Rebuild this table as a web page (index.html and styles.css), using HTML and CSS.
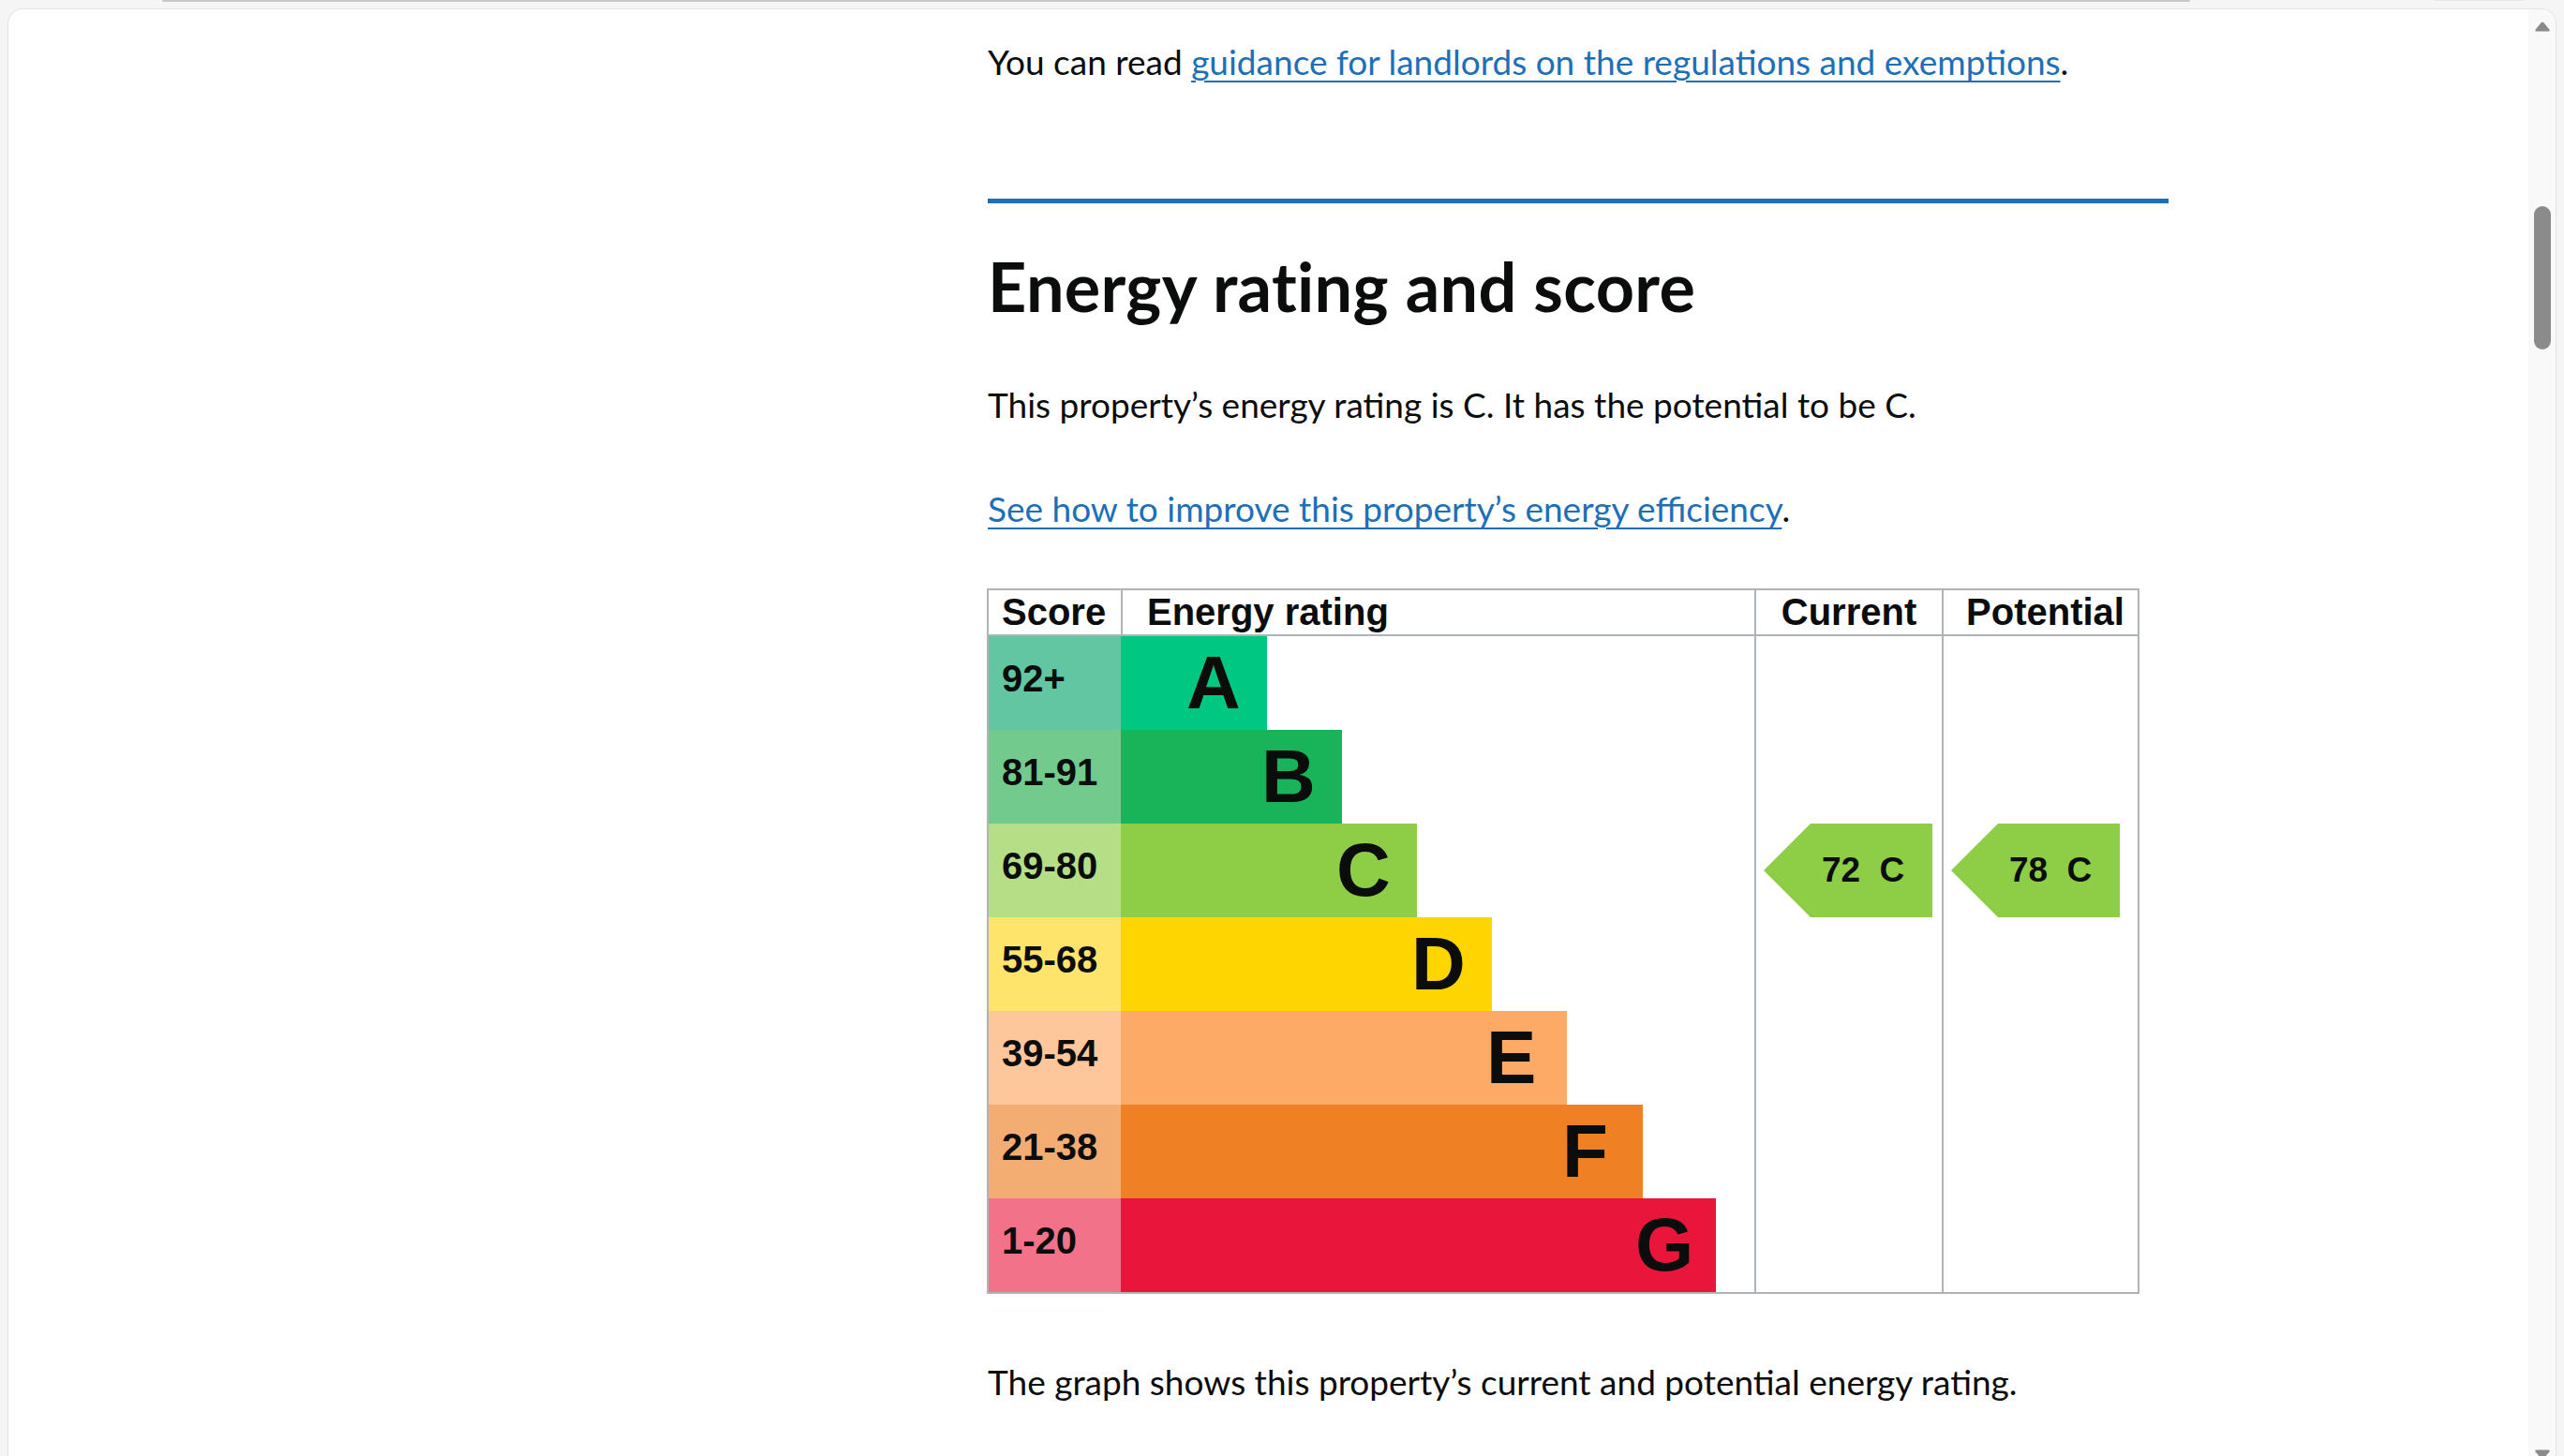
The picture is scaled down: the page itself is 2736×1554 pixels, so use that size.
FILE: index.html
```html
<!DOCTYPE html>
<html lang="en">
<head>
<meta charset="utf-8">
<title>Energy performance certificate</title>
<link rel="stylesheet" href="styles.css">
</head>
<body>
<div class="chrome">
  <span class="tab-shadow"></span>
  <span class="tab-shadow faint"></span>
</div>
<div class="window">
  <main class="page">
    <div class="layout">
      <div class="side"></div>
      <div class="content">
        <p class="body-text first">You can read <a class="link" href="#">guidance for landlords on the regulations and exemptions</a>.</p>
        <hr class="section-rule">
        <h2 class="heading">Energy rating and score</h2>
        <p class="body-text intro">This property’s energy rating is C. It has the potential to be C.</p>
        <p class="body-text improve"><a class="link" href="#">See how to improve this property’s energy efficiency</a>.</p>

        <div class="epc" role="img" aria-label="Energy rating chart">
          <div class="epc-head">
            <div class="h-cell h-score">Score</div>
            <div class="h-cell h-rating">Energy rating</div>
            <div class="h-cell h-current">Current</div>
            <div class="h-cell h-potential">Potential</div>
          </div>
          <div class="epc-body">
            <div class="bands">
              <div class="band band-a"><div class="band-score">92+</div><div class="band-bar"><span class="band-letter">A</span></div></div>
              <div class="band band-b"><div class="band-score">81-91</div><div class="band-bar"><span class="band-letter">B</span></div></div>
              <div class="band band-c"><div class="band-score">69-80</div><div class="band-bar"><span class="band-letter">C</span></div></div>
              <div class="band band-d"><div class="band-score">55-68</div><div class="band-bar"><span class="band-letter">D</span></div></div>
              <div class="band band-e"><div class="band-score">39-54</div><div class="band-bar"><span class="band-letter">E</span></div></div>
              <div class="band band-f"><div class="band-score">21-38</div><div class="band-bar"><span class="band-letter">F</span></div></div>
              <div class="band band-g"><div class="band-score">1-20</div><div class="band-bar"><span class="band-letter">G</span></div></div>
            </div>
            <div class="marker-col">
              <div class="marker marker-c">72 C</div>
            </div>
            <div class="marker-col">
              <div class="marker marker-c">78 C</div>
            </div>
          </div>
        </div>

        <p class="body-text graph-note">The graph shows this property’s current and potential energy rating.</p>
      </div>
    </div>
  </main>
  <div class="scrollbar" aria-hidden="true">
    <svg class="sb-arrow sb-up" width="16" height="11" viewBox="0 0 16 11"><path d="M6.6 1.2 Q8 -0.4 9.4 1.2 L15.4 8.6 Q16.4 10.5 14.2 10.5 L1.8 10.5 Q-0.4 10.5 0.6 8.6 Z" fill="#8b8b8b"/></svg>
    <div class="sb-thumb"></div>
    <svg class="sb-arrow sb-down" width="16" height="11" viewBox="0 0 16 11"><path d="M6.6 9.8 Q8 11.4 9.4 9.8 L15.4 2.4 Q16.4 0.5 14.2 0.5 L1.8 0.5 Q-0.4 0.5 0.6 2.4 Z" fill="#8b8b8b"/></svg>
  </div>
</div>
</body>
</html>
```
FILE: styles.css
```css
html, body {
  margin: 0;
  padding: 0;
}

body {
  background: #f5f5f5;
  height: 100vh;
  overflow: hidden;
  color: #0b0c0c;
  font-family: "Lato", "Noto Sans", sans-serif;
}

/* browser chrome strip above the page */
.chrome {
  height: 9px;
  display: flex;
  align-items: flex-start;
}

.tab-shadow {
  display: block;
  margin-left: 173px;
  width: 2164px;
  height: 2px;
  background: #c8c8c8;
  border-radius: 0 0 4px 4px;
}

.tab-shadow.faint {
  margin-left: 260px;
  width: 96px;
  height: 1px;
  background: #e8e8e8;
}

/* page window */
.window {
  margin: 0 8px;
  height: 1560px;
  display: flex;
  background: #ffffff;
  border: 1px solid #e2e2e2;
  border-bottom: none;
  border-radius: 16px 16px 0 0;
  overflow: hidden;
}

.page {
  flex: 1;
  min-width: 0;
  padding-top: 31px;
}

.layout {
  display: grid;
  grid-template-columns: 1045px 1260px;
}

.content {
  min-width: 0;
}

/* typography */
.body-text {
  margin: 0;
  font-size: 37px;
  line-height: 50px;
  font-weight: 400;
}

.link {
  color: #1d70b8;
  text-decoration: underline;
  text-decoration-thickness: 2px;
  text-underline-offset: 6px;
}

.section-rule {
  margin: 121px 0 0;
  height: 5px;
  border: 0;
  background: #1d70b8;
}

.heading {
  margin: 48px 0 0;
  font-size: 72px;
  line-height: 80px;
  font-weight: 700;
  letter-spacing: 0.3px;
}

.intro {
  margin-top: 62px;
}

.improve {
  margin-top: 61px;
}

.graph-note {
  margin-top: 69px;
}

/* EPC chart */
.epc {
  margin-top: 60px;
  margin-left: -1px;
  width: 1230px;
  box-sizing: border-box;
  border: 2px solid #b1b4b6;
  font-family: "Liberation Sans", Arial, sans-serif;
  font-weight: 700;
  color: #0b0c0c;
}

.epc-head,
.epc-body {
  display: grid;
  grid-template-columns: 141px 676px 200px 209px;
}

.epc-head {
  height: 49px;
  box-sizing: border-box;
  border-bottom: 2px solid #b1b4b6;
}

.h-cell {
  font-size: 40px;
  line-height: 47px;
  white-space: nowrap;
}

.h-score {
  padding-left: 14px;
}

.h-rating {
  padding-left: 26px;
  border-left: 2px solid #b1b4b6;
}

.h-current,
.h-potential {
  text-align: center;
  border-left: 2px solid #b1b4b6;
}

.h-potential {
  padding-left: 10px;
}

.bands {
  grid-column: 1 / 3;
  display: flex;
  flex-direction: column;
}

.band {
  display: flex;
  height: 100px;
}

.band-score {
  width: 141px;
  flex: none;
  box-sizing: border-box;
  padding-left: 14px;
  font-size: 40px;
  line-height: 90px;
}

.band-bar {
  display: flex;
  justify-content: flex-end;
  font-size: 80px;
  line-height: 100px;
}

.band-letter {
  width: 86px;
  flex: none;
  text-align: left;
}

.band-a .band-score { background: #62c6a2; }
.band-a .band-bar { background: #00c781; width: 156px; }
.band-b .band-score { background: #72cb8c; }
.band-b .band-bar { background: #19b459; width: 236px; }
.band-c .band-score { background: #b5de86; }
.band-c .band-bar { background: #8dce46; width: 316px; }
.band-d .band-score { background: #fee46b; }
.band-d .band-bar { background: #ffd500; width: 396px; }
.band-e .band-score { background: #fec69b; }
.band-e .band-bar { background: #fcaa65; width: 476px; }
.band-f .band-score { background: #f3ad73; }
.band-f .band-bar { background: #ef8023; width: 557px; }
.band-g .band-score { background: #f27389; }
.band-g .band-bar { background: #e9153b; width: 635px; }

.marker-col {
  border-left: 2px solid #b1b4b6;
  display: grid;
  grid-template-rows: repeat(7, 100px);
}

.marker {
  width: 180px;
  height: 100px;
  margin-left: 8px;
  box-sizing: border-box;
  padding-left: 62px;
  background: #8dce46;
  clip-path: polygon(0 50%, 50px 0, 100% 0, 100% 100%, 50px 100%);
  font-size: 37px;
  line-height: 100px;
  word-spacing: 10px;
  white-space: nowrap;
}

.marker-c {
  grid-row: 3;
}

/* scrollbar */
.scrollbar {
  width: 29px;
  flex: none;
  background: #f9f9f9;
  display: flex;
  flex-direction: column;
  align-items: center;
  padding-bottom: 12px;
  box-sizing: border-box;
}

.sb-arrow {
  display: block;
  flex: none;
}

.sb-up {
  margin-top: 13px;
}

.sb-thumb {
  margin-top: 186px;
  width: 18px;
  height: 153px;
  border-radius: 9px;
  background: #8b8b8b;
  flex: none;
}

.sb-down {
  margin-top: auto;
}
```
